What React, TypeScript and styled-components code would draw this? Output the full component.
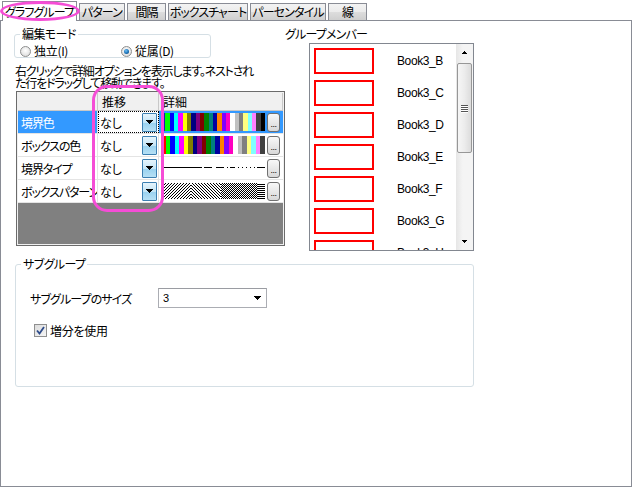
import React from 'react';
import styled, { createGlobalStyle } from 'styled-components';

const JP = `"Noto Sans CJK JP", "Noto Sans", sans-serif`;
const LATIN = `"Liberation Sans", Arial, sans-serif`;
const SEL = '#3399ff';
const PINK = '#f54dd6';

const GlobalStyle = createGlobalStyle`
  html, body { margin: 0; padding: 0; background: #fff; }
  body { font-family: ${JP}; font-size: 12px; color: #000; font-feature-settings: "palt"; }
  * { box-sizing: border-box; }
`;

const Window = styled.div`
  position: relative;
  width: 632px;
  height: 487px;
  display: flex;
  flex-direction: column;
  background: #fff;
`;

const TabBar = styled.div`
  display: flex;
  align-items: flex-end;
  gap: 2px;
  height: 21px;
  padding-left: 2px;
  border-bottom: 1px solid #898c95;
`;

const Tab = styled.div<{ $w: number; $active?: boolean }>`
  width: ${(p) => p.$w}px;
  height: ${(p) => (p.$active ? 20 : 17)}px;
  margin-bottom: ${(p) => (p.$active ? -1 : 0)}px;
  border: 1px solid #898c95;
  border-bottom: none;
  background: ${(p) =>
    p.$active ? '#fff' : 'linear-gradient(to bottom, #f3f3f3 0%, #ebebeb 50%, #dddddd 50%, #cfcfcf 100%)'};
  display: flex;
  align-items: center;
  justify-content: center;
  line-height: 14px;
  white-space: nowrap;
  letter-spacing: -0.9px;
`;

const Panel = styled.div`
  flex: 1;
  border: 1px solid #898c95;
  border-top: none;
  display: flex;
  flex-direction: column;
`;

const TopSection = styled.div`
  display: flex;
  margin-top: 5px;
  padding-left: 13px;
`;

const LeftCol = styled.div`
  width: 271px;
  display: flex;
  flex-direction: column;
`;

const GroupBox = styled.fieldset<{ $w: number; $h?: number }>`
  width: ${(p) => p.$w}px;
  ${(p) => (p.$h ? `height: ${p.$h}px;` : '')}
  margin: 0;
  padding: 3px 5px 0;
  border: 1px solid #d5dfe5;
  border-radius: 3px;
  min-inline-size: 0;
`;

const Legend = styled.legend<{ $ml?: number }>`
  padding: 0 2px;
  margin-left: ${(p) => p.$ml ?? 0}px;
  line-height: 16px;
  font-size: 12px;
  letter-spacing: -0.6px;
`;

const RadioRow = styled.div`
  display: flex;
  align-items: center;
  height: 12px;
`;

const RadioLabel = styled.label<{ $w?: number }>`
  display: flex;
  align-items: center;
  gap: 3px;
  ${(p) => (p.$w ? `width: ${p.$w}px;` : '')}
  line-height: 12px;
  letter-spacing: -0.3px;
`;

const RadioDot = styled.span<{ $checked?: boolean }>`
  width: 11px;
  height: 11px;
  border-radius: 50%;
  border: 1px solid #8e8f8f;
  background: radial-gradient(circle at 50% 40%, #ffffff 0%, #e6e6e6 60%, #d0d0d0 100%);
  display: flex;
  align-items: center;
  justify-content: center;
  &::after {
    content: '';
    display: ${(p) => (p.$checked ? 'block' : 'none')};
    width: 5px;
    height: 5px;
    border-radius: 50%;
    background: radial-gradient(circle at 40% 35%, #6fc0f5 0%, #1b72b8 55%, #0b3a66 100%);
  }
`;

const InfoText = styled.div`
  margin: 7px 0 0 1px;
  line-height: 12px;
  white-space: nowrap;
  letter-spacing: -1.15px;
`;

const Grid = styled.div`
  margin: 2px 0 0 2px;
  width: 269px;
  height: 155px;
  border: 1px solid #6b6b6b;
  padding: 1px;
  background: #f0f0f0;
`;

const GridInner = styled.div`
  height: 100%;
  background: #808080;
  display: flex;
  flex-direction: column;
`;

const HeaderRow = styled.div`
  display: grid;
  grid-template-columns: 80px 61px 124px;
  height: 18px;
  background: #f0f0f0;
`;

const HeaderCell = styled.div`
  border-right: 1px solid #c8c8c8;
  border-bottom: 1px solid #c8c8c8;
  padding-left: 4px;
  line-height: 17px;
`;

const Row = styled.div`
  display: grid;
  grid-template-columns: 80px 61px 124px;
  height: 23px;
  background: #fff;
  border-bottom: 1px solid #e4e4e4;
`;

const NameCell = styled.div<{ $sel?: boolean }>`
  display: flex;
  align-items: center;
  padding-left: 3px;
  white-space: nowrap;
  overflow: hidden;
  letter-spacing: -1.1px;
  background: ${(p) => (p.$sel ? SEL : '#fff')};
  color: ${(p) => (p.$sel ? '#fff' : '#000')};
  border-right: 1px solid #e4e4e4;
`;

const TrendCell = styled.div<{ $focus?: boolean }>`
  display: flex;
  align-items: center;
  padding: 0 1px 0 2px;
  background: #fff;
  border-right: 1px solid #e4e4e4;
  outline: ${(p) => (p.$focus ? '1px dotted #000' : 'none')};
  outline-offset: -1px;
`;

const DropButton = styled.div`
  margin-left: auto;
  width: 15px;
  height: 19px;
  border: 1px solid #3c7fb1;
  border-radius: 1px;
  background: linear-gradient(to bottom, #e5f4fc 0%, #c4e5f6 50%, #98d1ef 51%, #b6e0f5 100%);
  display: flex;
  align-items: center;
  justify-content: center;
`;

const DetailCell = styled.div<{ $sel?: boolean }>`
  display: flex;
  align-items: center;
  gap: 2px;
  padding-left: 2px;
  background: ${(p) => (p.$sel ? SEL : '#fff')};
`;

const Swatch = styled.div`
  width: 104px;
  height: 18px;
  display: flex;
`;

const DotsButton = styled.div`
  width: 13px;
  height: 19px;
  border: 1px solid #707070;
  border-radius: 3px;
  background: linear-gradient(to bottom, #f8f8f8 0%, #e8e8e8 50%, #d8d8d8 100%);
  font-family: ${LATIN};
  font-size: 9px;
  line-height: 9px;
  display: flex;
  align-items: flex-end;
  justify-content: center;
  padding-bottom: 2px;
  letter-spacing: -0.5px;
`;

const RightCol = styled.div`
  display: flex;
  flex-direction: column;
`;

const Label = styled.div`
  line-height: 16px;
  white-space: nowrap;
  letter-spacing: -0.8px;
`;

const ListBox = styled.div`
  margin: 1px 0 0 24px;
  width: 165px;
  height: 208px;
  border: 1px solid #828790;
  display: flex;
`;

const ListItems = styled.div`
  flex: 1;
  overflow: hidden;
  padding: 4px 0 0 4px;
  display: flex;
  flex-direction: column;
  gap: 6px;
`;

const Item = styled.div`
  display: flex;
  align-items: center;
  flex: none;
  height: 26px;
`;

const RedBox = styled.div`
  width: 60px;
  height: 26px;
  border: 2px solid #ff0000;
`;

const ItemText = styled.span`
  margin-left: 23px;
  font-family: ${LATIN};
  font-size: 12px;
  letter-spacing: -0.4px;
`;

const ScrollBar = styled.div`
  width: 17px;
  display: flex;
  flex-direction: column;
  align-items: center;
  background: linear-gradient(to right, #e6e6e6 0%, #f4f4f4 40%, #f4f4f4 100%);
`;

const ScrollArrow = styled.div`
  height: 17px;
  width: 17px;
  display: flex;
  align-items: center;
  justify-content: center;
`;

const Thumb = styled.div`
  margin-top: 2px;
  width: 15px;
  height: 90px;
  border: 1px solid #979797;
  border-radius: 2px;
  background: linear-gradient(to right, #f6f6f6 0%, #ececec 50%, #dcdcdc 100%);
  display: flex;
  flex-direction: column;
  align-items: center;
  justify-content: center;
  gap: 1px;
`;

const Grip = styled.div`
  width: 7px;
  height: 1px;
  background: #555;
  box-shadow: 0 1px 0 #fff;
`;

const Spacer = styled.div`
  flex: 1;
`;

const SubBox = styled(GroupBox)`
  margin: 5px 0 0 14px;
  padding: 0;
`;

const SizeRow = styled.div`
  display: flex;
  align-items: center;
  margin: 16px 0 0 14px;
  height: 20px;
`;

const SizeLabel = styled.span`
  width: 128px;
  white-space: nowrap;
  letter-spacing: -0.9px;
`;

const Combo = styled.div`
  width: 109px;
  height: 20px;
  border: 1px solid #abadb3;
  border-top-color: #9a9ca2;
  background: #fff;
  display: flex;
  align-items: center;
  padding: 0 5px 0 4px;
  font-family: ${LATIN};
  font-size: 11px;
  justify-content: space-between;
`;

const CheckRow = styled.label`
  display: flex;
  align-items: center;
  gap: 3px;
  margin: 15px 0 0 18px;
  height: 15px;
  letter-spacing: -0.3px;
`;

const CheckBox = styled.span`
  width: 13px;
  height: 13px;
  border: 1px solid #8f8f8f;
  background: linear-gradient(135deg, #dcdcdc 0%, #f5f5f5 100%);
  display: flex;
  align-items: center;
  justify-content: center;
`;

const Ellipse = styled.div`
  position: absolute;
  left: 0px;
  top: 1px;
  width: 80px;
  height: 20px;
  border: 3px solid ${PINK};
  border-radius: 50%;
  pointer-events: none;
`;

const Highlight = styled.div`
  position: absolute;
  left: 92px;
  top: 85px;
  width: 72px;
  height: 127px;
  border: 3px solid ${PINK};
  border-radius: 15px;
  pointer-events: none;
`;

const Tri = ({ w = 7, h = 4, up = false }: { w?: number; h?: number; up?: boolean }) => (
  <svg width={w} height={h} viewBox={`0 0 ${w} ${h}`} shapeRendering="crispEdges">
    <polygon points={up ? `0,${h} ${w},${h} ${w / 2},0` : `0,0 ${w},0 ${w / 2},${h}`} fill="#000" />
  </svg>
);

const row1 = [
  '#1c1cb0', '#00ff00', '#0000ff', '#00ffff', '#ff00ff', '#ffff00', '#808000', '#000080',
  '#800080', '#800000', '#008000', '#008080', '#0000a0', '#ff8000', '#8000ff', '#ff00c0',
  '#ffffff', '#c0c0c0', '#808080', '#ffff80', '#80ffff', '#ff80ff', '#404040', '#000000',
];
const row2 = [
  '#ff0000', '#00ff00', '#0000ff', '#00ffff', '#ff00ff', '#ffff00', '#808000', '#000080',
  '#800080', '#800000', '#008000', '#008080', '#0000a0', '#ff8000', '#8000ff', '#ff00c0',
  '#ffffff', '#c0c0c0', '#808080', '#ffff80', '#80ffff', '#ff80ff', '#404040',
];

const ColorBar = ({ colors }: { colors: string[] }) => {
  const w = 104 / colors.length;
  return (
    <svg width="104" height="18" shapeRendering="crispEdges">
      {colors.map((c, i) => (
        <rect key={i} x={i * w} y={0} width={w + 0.6} height={18} fill={c} />
      ))}
    </svg>
  );
};

const LineBar = () => (
  <svg width="104" height="18" shapeRendering="crispEdges">
    <rect width="104" height="18" fill="#fff" />
    <g stroke="#000" strokeWidth="1">
      <line x1="0" y1="8.5" x2="41" y2="8.5" />
      <line x1="43" y1="8.5" x2="51" y2="8.5" />
      <line x1="55" y1="8.5" x2="63" y2="8.5" />
      <line x1="66" y1="8.5" x2="67" y2="8.5" />
      <line x1="69" y1="8.5" x2="74" y2="8.5" />
      <line x1="77" y1="8.5" x2="78" y2="8.5" />
      <line x1="81" y1="8.5" x2="82" y2="8.5" />
      <line x1="85" y1="8.5" x2="86" y2="8.5" />
      <line x1="89" y1="8.5" x2="90" y2="8.5" />
      <line x1="93" y1="8.5" x2="94" y2="8.5" />
      <line x1="96" y1="8.5" x2="104" y2="8.5" />
    </g>
  </svg>
);

const PatternBar = () => (
  <svg width="104" height="18" shapeRendering="crispEdges">
    <defs>
      <pattern id="pa" width="3" height="3" patternUnits="userSpaceOnUse">
        <rect width="3" height="3" fill="#fff" />
        <rect x="0" y="2" width="1" height="1" fill="#000" />
        <rect x="1" y="1" width="1" height="1" fill="#000" />
        <rect x="2" y="0" width="1" height="1" fill="#000" />
      </pattern>
      <pattern id="pb" width="3" height="3" patternUnits="userSpaceOnUse">
        <rect width="3" height="3" fill="#fff" />
        <rect x="0" y="0" width="1" height="1" fill="#000" />
        <rect x="1" y="1" width="1" height="1" fill="#000" />
        <rect x="2" y="2" width="1" height="1" fill="#000" />
      </pattern>
      <pattern id="pc" width="2" height="2" patternUnits="userSpaceOnUse">
        <rect width="2" height="2" fill="#fff" />
        <rect x="0" y="0" width="1" height="1" fill="#000" />
        <rect x="1" y="1" width="1" height="1" fill="#000" />
      </pattern>
      <pattern id="pd" width="2" height="2" patternUnits="userSpaceOnUse">
        <rect width="2" height="2" fill="#fff" />
        <rect x="0" y="0" width="2" height="1" fill="#000" />
      </pattern>
    </defs>
    <rect x="0" y="1" width="30" height="16" fill="url(#pa)" />
    <rect x="30" y="1" width="30" height="16" fill="url(#pb)" />
    <rect x="60" y="1" width="36" height="16" fill="url(#pc)" />
    <rect x="96" y="1" width="8" height="16" fill="url(#pd)" />
  </svg>
);

const Check = () => (
  <svg width="9" height="9" viewBox="0 0 9 9">
    <path d="M1 4.5 L3.5 7.5 L8 1" fill="none" stroke="#2d4b8a" strokeWidth="1.8" />
  </svg>
);

const tabs = [
  { label: 'グラフグループ', w: 75 },
  { label: 'パターン', w: 46 },
  { label: '間隔', w: 39 },
  { label: 'ボックスチャート', w: 80 },
  { label: 'パーセンタイル', w: 76 },
  { label: '線', w: 39 },
];

const rows = [
  { name: '境界色', detail: <ColorBar colors={row1} /> },
  { name: 'ボックスの色', detail: <ColorBar colors={row2} /> },
  { name: '境界タイプ', detail: <LineBar /> },
  { name: 'ボックスパターン', detail: <PatternBar /> },
];

const members = ['B', 'C', 'D', 'E', 'F', 'G', 'H'];

export default function App() {
  return (
    <Window>
      <GlobalStyle />
      <TabBar>
        {tabs.map((t, i) => (
          <Tab key={t.label} $w={t.w} $active={i === 0}>
            {t.label}
          </Tab>
        ))}
      </TabBar>
      <Panel>
        <TopSection>
          <LeftCol>
            <GroupBox $w={197}>
              <Legend>編集モード</Legend>
              <RadioRow>
                <RadioLabel $w={101}>
                  <RadioDot />
                  独立(I)
                </RadioLabel>
                <RadioLabel>
                  <RadioDot $checked />
                  従属(D)
                </RadioLabel>
              </RadioRow>
            </GroupBox>
            <InfoText>
              右クリックで詳細オプションを表示します。ネストされ
              <br />
              た行をドラッグして移動できます。
            </InfoText>
            <Grid>
              <GridInner>
                <HeaderRow>
                  <HeaderCell />
                  <HeaderCell>推移</HeaderCell>
                  <HeaderCell>詳細</HeaderCell>
                </HeaderRow>
                {rows.map((r, i) => (
                  <Row key={r.name}>
                    <NameCell $sel={i === 0}>{r.name}</NameCell>
                    <TrendCell $focus={i === 0}>
                      なし
                      <DropButton>
                        <Tri />
                      </DropButton>
                    </TrendCell>
                    <DetailCell $sel={i === 0}>
                      <Swatch>{r.detail}</Swatch>
                      <DotsButton>...</DotsButton>
                    </DetailCell>
                  </Row>
                ))}
              </GridInner>
            </Grid>
          </LeftCol>
          <RightCol>
            <Label>グループメンバー</Label>
            <ListBox>
              <ListItems>
                {members.map((m) => (
                  <Item key={m}>
                    <RedBox />
                    <ItemText>Book3_{m}</ItemText>
                  </Item>
                ))}
              </ListItems>
              <ScrollBar>
                <ScrollArrow>
                  <Tri w={5} h={3} up />
                </ScrollArrow>
                <Thumb>
                  <Grip />
                  <Grip />
                  <Grip />
                  <Grip />
                </Thumb>
                <Spacer />
                <ScrollArrow>
                  <Tri w={5} h={3} />
                </ScrollArrow>
              </ScrollBar>
            </ListBox>
          </RightCol>
        </TopSection>
        <SubBox $w={459} $h={131}>
          <Legend $ml={5}>サブグループ</Legend>
          <SizeRow>
            <SizeLabel>サブグループのサイズ</SizeLabel>
            <Combo>
              <span>3</span>
              <Tri />
            </Combo>
          </SizeRow>
          <CheckRow>
            <CheckBox>
              <Check />
            </CheckBox>
            増分を使用
          </CheckRow>
        </SubBox>
      </Panel>
      <Ellipse />
      <Highlight />
    </Window>
  );
}
